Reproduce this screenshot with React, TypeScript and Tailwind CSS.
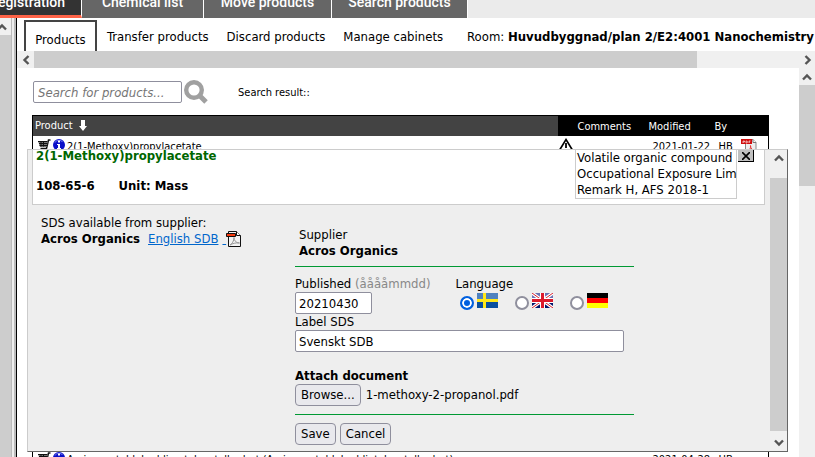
import type { ReactNode } from 'react';
import clsx from 'clsx';

type Direction = 'up' | 'down' | 'left' | 'right';

const ARROWS: Record<Direction, string> = {
  up: 'M1 7.5 5 3.5 9 7.5',
  down: 'M1 2.5 5 6.5 9 2.5',
  left: 'M7.5 1 3.5 5 7.5 9',
  right: 'M2.5 1 6.5 5 2.5 9',
};

function Arrow({ direction }: { direction: Direction }) {
  return (
    <svg viewBox="0 0 10 10" className="size-2.5 shrink-0" fill="none" stroke="#555" strokeWidth="2.4">
      <path d={ARROWS[direction]} />
    </svg>
  );
}

function SearchIcon() {
  return (
    <svg viewBox="0 0 24 24" className="size-6" fill="none" stroke="#a0a0a0">
      <circle cx="10" cy="10" r="7.8" strokeWidth="4.4" />
      <path d="m15.5 15.5 6.5 6.5" strokeWidth="5" />
    </svg>
  );
}

function CartIcon() {
  return (
    <svg viewBox="0 0 13 13" className="h-[13px] w-[13px] shrink-0" fill="none" stroke="#111">
      <path d="M12.5 1H10.5L8.5 9.5H2.5" strokeWidth="1.5" />
      <path d="M0 2h10L8.5 8H2z" fill="#777" stroke="none" />
      <path d="M0 2.5h9.5M1 4.5h8.5M1.5 6.5h7.5M3 2.5v5M5.5 2.5v5" strokeWidth="1" />
      <circle cx="3.5" cy="11.5" r="1" fill="#111" />
      <circle cx="8" cy="11.5" r="1" fill="#111" />
    </svg>
  );
}

function InfoIcon() {
  return (
    <svg viewBox="0 0 12 12" className="size-3 shrink-0">
      <circle cx="6" cy="6" r="6" fill="#0a0fc8" />
      <path d="M2 3.5C3 1 8 .5 9.5 3" stroke="#7d86ee" fill="none" />
      <path d="M5 1.5h2v2H5zM4 5h3v4h1v1H4V9h1V6H4z" fill="#fff" />
    </svg>
  );
}

function RedPdfIcon() {
  return (
    <svg viewBox="0 0 16 16" className="size-4 shrink-0">
      <path d="M4.5 .5h7.5l3 3v12H4.5z" fill="#eee" stroke="#888" />
      <path d="M12 .5v3h3" fill="#fff" stroke="#777" />
      <path d="M0 0h11v5H0z" fill="#d00d0d" />
      <path d="M2 4V2h1.5v1H2M5 2h1l.5 1L6 4H5zM8 4V2h1.5M8 3h1" stroke="#fff" strokeWidth=".6" fill="none" />
      <path d="M6 14c2-1 4-5 3.5-7.5 0 3 2 5 4.5 5-3-.5-6 1-8 2.5z" fill="none" stroke="#e23b3b" />
    </svg>
  );
}

function PdfIcon() {
  return (
    <svg viewBox="0 0 15 16" className="h-4 w-[15px]">
      <path d="M2.5 .5h8.500l3.500 4v11h-12z" fill="#f4f4f4" />
      <path d="M2.5 5.5v10h12v-11l-4-4h-8v2" fill="none" stroke="#111" />
      <path d="M10.5 .5v4h4" fill="#fff" stroke="#111" />
      <path d="M.5 2.5h9v3h-9z" fill="#f63a0f" stroke="#111" />
      <path d="M4 14c2-1 4-4 4-7.5 0 3 2 5.5 5.5 5.5-4-.5-7 .5-9.5 2z" fill="none" stroke="#999" />
    </svg>
  );
}

function WarningIcon() {
  return (
    <svg viewBox="0 0 16 14" className="h-3.5 w-4" fill="none" stroke="#000">
      <path d="M8 1.5 15 13H1z" strokeWidth="1.6" />
      <path d="M8 5v5M8 11v1.5" strokeWidth="1.8" />
    </svg>
  );
}

function SwedishFlag() {
  return (
    <svg viewBox="0 0 21 15" className="h-[15px] w-[21px]" shapeRendering="crispEdges">
      <path fill="#0a4f9e" d="M0 0h21v15H0z" />
      <path fill="#4f82bf" d="M0 0h21v6H0z" />
      <path fill="#ffe81a" d="M6 0h3v15H6zM0 6h21v3H0z" />
    </svg>
  );
}

function BritishFlag() {
  return (
    <svg viewBox="0 0 21 15" className="h-[15px] w-[21px]">
      <path fill="#00146b" d="M0 0h21v15H0z" />
      <path fill="#6a72b4" d="M0 0h21v6H0z" />
      <path stroke="#fff" strokeWidth="3.2" d="m0 0 21 15M21 0 0 15" />
      <path stroke="#d8202c" strokeWidth="1" d="m0 0 21 15M21 0 0 15" />
      <path fill="#fff" d="M8 0h5v15H8zM0 5h21v5H0z" />
      <path fill="#dc1a2c" d="M9 0h3v15H9zM0 6h21v3H0z" />
    </svg>
  );
}

function GermanFlag() {
  return (
    <svg viewBox="0 0 21 15" className="h-[15px] w-[21px]" shapeRendering="crispEdges">
      <path fill="#000" d="M0 0h21v5H0z" />
      <path fill="#f00" d="M0 5h21v5H0z" />
      <path fill="#ff0" d="M0 10h21v5H0z" />
    </svg>
  );
}

function MainTab({ active, className, children }: { active?: boolean; className: string; children: ReactNode }) {
  return (
    <a
      href="#"
      className={clsx(
        'flex h-[18px] items-end justify-center overflow-hidden border-r border-white text-sm leading-5 whitespace-nowrap text-white',
        active ? 'border-b-3 border-b-[#ff6347] bg-[#333] pb-[3px]' : 'bg-[#666] pb-1.5',
        className,
      )}
    >
      {children}
    </a>
  );
}

interface ProductRowProps {
  name: string;
  modified: string;
  by: string;
  hazard?: boolean;
}

function ProductRow({ name, modified, by, hazard }: ProductRowProps) {
  return (
    <tr className="h-[313px] align-top text-[11px] whitespace-nowrap">
      <td className="pt-[3px] pl-[5px]">
        <span className="flex items-start gap-0.5">
          <CartIcon />
          <InfoIcon />
          <span className="leading-4">{name}</span>
        </span>
      </td>
      <td className="pt-0.5">{hazard && <WarningIcon />}</td>
      <td />
      <td className="pt-[3px] pl-1 leading-4">{modified}</td>
      <td className="pt-[3px] pl-1 leading-4">{by}</td>
      <td className="pt-[3px]">{hazard && <RedPdfIcon />}</td>
    </tr>
  );
}

const LANGUAGES = [
  { id: 'sv', label: 'Swedish', Flag: SwedishFlag },
  { id: 'en', label: 'English', Flag: BritishFlag },
  { id: 'de', label: 'German', Flag: GermanFlag },
];

function LanguagePicker() {
  return (
    <fieldset>
      <legend className="leading-4">Language</legend>
      <div className="flex gap-3 pt-px">
        {LANGUAGES.map(({ id, label, Flag }) => (
          <label key={id} className="flex items-start gap-[3px] pl-[5px]" aria-label={label}>
            <input
              type="radio"
              name="language"
              defaultChecked={id === 'sv'}
              className="mt-[3px] size-3.5 appearance-none rounded-full border-2 border-[#8f8f9d] bg-white checked:border-[#0060df] checked:bg-[#0060df] checked:shadow-[inset_0_0_0_2px_white]"
            />
            <Flag />
          </label>
        ))}
      </div>
    </fieldset>
  );
}

const BUTTON = 'h-[22px] rounded border border-[#8f8f9d] bg-[#e9e9ed] px-[5px] leading-4';
const FIELD = 'h-[22px] rounded-xs border border-[#8f8f9d] bg-white px-[3px] leading-4';

function SdsForm() {
  return (
    <form className="flex w-[339px] flex-col items-start pt-[22px]">
      <div className="w-full border-b border-[#009933] px-1 pb-[7px]">
        <p>Supplier</p>
        <p className="font-bold">Acros Organics</p>
      </div>
      <div className="flex gap-[25px] pt-[9px]">
        <div className="flex flex-col">
          <label htmlFor="published">
            Published <span className="text-[#888]">(ååååmmdd)</span>
          </label>
          <input id="published" defaultValue="20210430" className={clsx(FIELD, 'w-[77px]')} />
        </div>
        <LanguagePicker />
      </div>
      <label htmlFor="label-sds">Label SDS</label>
      <input id="label-sds" defaultValue="Svenskt SDB" className={clsx(FIELD, 'w-[329px]')} />
      <p className="pt-4 font-bold">Attach document</p>
      <div className="flex w-full items-center gap-[5px] border-b border-[#009933] pb-2">
        <button type="button" className={BUTTON}>Browse...</button>
        <span>1-methoxy-2-propanol.pdf</span>
      </div>
      <div className="flex gap-1 pt-2">
        <button type="button" className={BUTTON}>Save</button>
        <button type="button" className={BUTTON}>Cancel</button>
      </div>
    </form>
  );
}

function SdsDialog() {
  return (
    <section className="absolute top-[81px] right-[11px] left-2.5 flex h-[303px] overflow-hidden border border-t-[#ccc] border-r-[#666] border-b-[#666] border-l-[#ccc] bg-[#eee] text-[13px] leading-4">
      <div className="min-w-0 flex-1 pr-[5px] pl-1">
        <header className="flex h-[55px] justify-between border border-t-0 border-[#ccc] bg-white pl-[3px] font-bold">
          <div>
            <h2 className="leading-3 text-[#060]">2(1-Methoxy)propylacetate</h2>
            <p className="flex gap-6 pt-4">
              <span>108-65-6</span>
              <span>Unit: Mass</span>
            </p>
          </div>
          <div className="flex items-start gap-px pr-2.5 font-normal">
            <p className="w-[162px] border border-t-0 border-[#ccc] pl-px whitespace-nowrap">
              Volatile organic compound
              <br />
              Occupational Exposure Lim
              <br />
              Remark H, AFS 2018-1
            </p>
            <button type="button" aria-label="Close" className="grid h-3 w-4 place-items-center border-r border-b border-black bg-[#c0c0c0]">
              <svg viewBox="0 0 8 8" className="size-2" stroke="#000" strokeWidth="1.6">
                <path d="m0 0 8 8M8 0 0 8" />
              </svg>
            </button>
          </div>
        </header>
        <div className="flex">
          <div className="w-[263px] pt-2.5 pl-[9px]">
            <p>SDS available from supplier:</p>
            <p className="flex gap-2">
              <b>Acros Organics</b>
              <a href="#" className="flex text-[#0066cc]">
                <span className="mr-1 underline">English SDB</span>
                <span className="whitespace-pre underline"> </span>
                <PdfIcon />
              </a>
            </p>
          </div>
          <SdsForm />
        </div>
      </div>
      <div className="flex w-[17px] flex-col items-center bg-[#f0f0f0]">
        <div className="flex h-7 items-start pt-[3px]">
          <Arrow direction="up" />
        </div>
        <div className="w-full flex-1 bg-[#cdcdcd]" />
        <div className="flex h-5 items-center pt-1">
          <Arrow direction="down" />
        </div>
      </div>
    </section>
  );
}

export default function App() {
  return (
    <div className="flex h-screen flex-col overflow-hidden bg-white font-['DejaVu_Sans_Condensed','DejaVu_Sans',sans-serif] text-[13px] leading-4 text-black">
      <nav className="flex h-[18px] shrink-0 bg-[#ebebeb] font-[Roboto,sans-serif] font-medium">
        <MainTab active className="w-[82px] justify-end pr-4">Registration</MainTab>
        <MainTab className="w-[122px]">Chemical list</MainTab>
        <MainTab className="w-32">Move products</MainTab>
        <MainTab className="w-[136px]">Search products</MainTab>
      </nav>
      <div className="flex min-h-0 flex-1">
        <div className="flex w-[17px] shrink-0 border-r border-black bg-[#bbb]">
          <div className="flex w-3 flex-col items-start border-r border-[#bbb] bg-[#cdcdcd]">
            <div className="flex h-[17px] w-full items-center justify-end bg-[#f0f0f0] pr-1">
              <Arrow direction="up" />
            </div>
          </div>
          <div className="w-0.5 bg-[#eee]" />
        </div>
        <main className="flex min-w-0 flex-1 flex-col">
          <div className="flex h-[33px] shrink-0 items-end gap-[18px] pl-[7px] whitespace-nowrap">
            <a href="#" className="-mr-2 flex h-[31px] w-[73px] shrink-0 items-center justify-center border-2 border-b-0 border-[#444] pt-1.5">Products</a>
            <a href="#" className="pb-1.5">Transfer products</a>
            <a href="#" className="pb-1.5">Discard products</a>
            <a href="#" className="pb-1.5">Manage cabinets</a>
            <span className="pb-1.5 pl-1.5">
              Room: <b>Huvudbyggnad/plan 2/E2:4001 Nanochemistry</b>
            </span>
          </div>
          <div className="flex h-[17px] shrink-0 items-center bg-[#f0f0f0] pr-0.5">
            <div className="flex w-[17px] shrink-0 justify-center">
              <Arrow direction="left" />
            </div>
            <div className="mr-[106px] h-full flex-1 bg-[#cdcdcd]" />
            <Arrow direction="right" />
          </div>
          <div className="flex min-h-0 flex-1">
            <div className="relative min-w-0 flex-1 overflow-hidden">
              <form className="flex items-center px-4 pt-3">
                <input
                  type="search"
                  aria-label="Search for products"
                  placeholder="Search for products..."
                  className="h-[22px] w-[149px] rounded-xs border border-[#8f8f9d] px-1 placeholder:text-[#757575] placeholder:italic"
                />
                <button type="button" aria-label="Search" className="ml-0.5">
                  <SearchIcon />
                </button>
                <span className="ml-[30px] pt-0.5 text-[11px]">Search result::</span>
              </form>
              <div className="pt-[11px] pr-[30px] pl-[15px]">
                <table className="w-full table-fixed border-x border-t border-black">
                  <colgroup>
                    <col />
                    <col className="w-5" />
                    <col className="w-[71px]" />
                    <col className="w-[66px]" />
                    <col className="w-[26px]" />
                    <col className="w-7" />
                  </colgroup>
                  <thead>
                    <tr className="h-5 bg-black text-left text-[11px] text-white">
                      <th className="bg-[#434343] pl-0.5 font-normal">
                        <span className="flex items-center gap-1.5">
                          Product
                          <svg viewBox="0 0 8 11" className="h-[11px] w-2" fill="#fff">
                            <path d="M2 0h4v6h2L4 11 0 6h2z" />
                          </svg>
                        </span>
                      </th>
                      <th />
                      <th className="pt-0.5 font-normal">Comments</th>
                      <th className="pt-0.5 font-normal">Modified</th>
                      <th className="pt-0.5 font-normal">By</th>
                      <th />
                    </tr>
                  </thead>
                  <tbody>
                    <ProductRow name="2(1-Methoxy)propylacetate" modified="2021-01-22" by="HB" hazard />
                    <ProductRow name="Aminoacetaldehyddimetylacetalhydrat (Aminoacetaldehyddietylacetalhydrat)" modified="2021-04-28" by="HB" />
                  </tbody>
                </table>
              </div>
              <SdsDialog />
            </div>
            <div className="flex w-4 shrink-0 flex-col items-center bg-[#f0f0f0]">
              <div className="flex h-[17px] items-center">
                <Arrow direction="up" />
              </div>
              <div className="h-[101px] w-full bg-[#cdcdcd]" />
            </div>
          </div>
        </main>
      </div>
    </div>
  );
}
